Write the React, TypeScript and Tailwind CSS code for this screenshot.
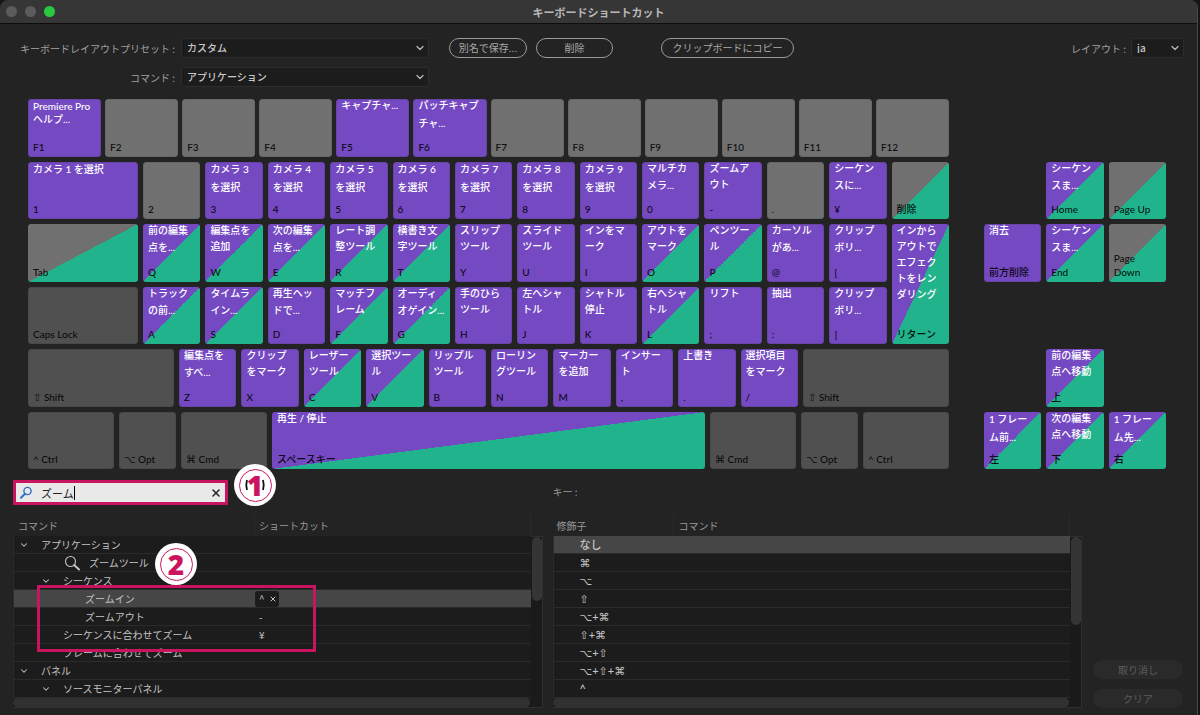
import { ChevronDown, X } from 'lucide-react'
import clsx from 'clsx'

type Tone = 'app' | 'empty' | 'both' | 'panel' | 'modifier'

type KeyDef = {
  cap: string
  label?: string
  tone: Tone
  leading?: string
  className?: string
}

const tones: Record<Tone, string> = {
  app: 'bg-[#7449c2] border-[#6844a9]',
  empty: 'bg-[#707070] border-[#676767]',
  both: 'bg-[linear-gradient(to_bottom_right,#7449c2_50%,#21b48c_50%)] border-transparent bg-origin-border',
  panel:
    'bg-[linear-gradient(to_bottom_right,#707070_50%,#21b48c_50%)] border-transparent bg-origin-border',
  modifier: 'bg-[#505050] border-[#494949]',
}

const app = (cap: string, label: string): KeyDef => ({ cap, label, tone: 'app' })
const both = (cap: string, label: string, className?: string): KeyDef => ({
  cap,
  label,
  tone: 'both',
  className,
})
const empty = (cap: string): KeyDef => ({ cap, tone: 'empty' })
const modifier = (cap: string): KeyDef => ({ cap, tone: 'modifier' })

const functionKeys: KeyDef[] = [
  {
    cap: 'F1',
    label: 'Premiere Pro\nヘルプ...',
    tone: 'app',
    leading: 'leading-[13px]',
  },
  empty('F2'),
  empty('F3'),
  empty('F4'),
  app('F5', 'キャプチャ...'),
  {
    cap: 'F6',
    label: 'パッチキャプ\nチャ...',
    tone: 'app',
    leading: 'leading-[18px] -mt-1',
  },
  empty('F7'),
  empty('F8'),
  empty('F9'),
  empty('F10'),
  empty('F11'),
  empty('F12'),
]

const letterKeys: KeyDef[] = [
  app('1', 'カメラ 1 を選択'),
  empty('2'),
  app('3', 'カメラ 3\nを選択'),
  app('4', 'カメラ 4\nを選択'),
  app('5', 'カメラ 5\nを選択'),
  app('6', 'カメラ 6\nを選択'),
  app('7', 'カメラ 7\nを選択'),
  app('8', 'カメラ 8\nを選択'),
  app('9', 'カメラ 9\nを選択'),
  app('0', 'マルチカ\nメラ...'),
  app('-', 'ズームア\nウト'),
  empty('.'),
  app('¥', 'シーケン\nスに...'),
  { cap: '削除', tone: 'panel' },

  { cap: 'Tab', tone: 'panel' },
  both('Q', '前の編集\n点を...'),
  both('W', '編集点を\n追加'),
  both('E', '次の編集\n点を...'),
  both('R', 'レート調\n整ツール'),
  both('T', '横書き文\n字ツール'),
  app('Y', 'スリップ\nツール'),
  app('U', 'スライド\nツール'),
  app('I', 'インをマ\nーク'),
  both('O', 'アウトを\nマーク'),
  both('P', 'ペンツー\nル'),
  app('@', 'カーソル\nがあ...'),
  app('[', 'クリップ\nボリ...'),
  both(
    'リターン',
    'インから\nアウトで\nエフェク\nトをレン\nダリング',
    'row-span-2',
  ),

  modifier('Caps Lock'),
  both('A', 'トラック\nの前...'),
  both('S', 'タイムラ\nイン...'),
  app('D', '再生ヘッ\nドで...'),
  both('F', 'マッチフ\nレーム'),
  both('G', 'オーディ\nオゲイン...'),
  app('H', '手のひら\nツール'),
  app('J', '左へシャ\nトル'),
  app('K', 'シャトル\n停止'),
  both('L', '右へシャ\nトル'),
  app(';', 'リフト'),
  app(':', '抽出'),
  app(']', 'クリップ\nボリ...'),
]

const shiftRow: KeyDef[] = [
  modifier('⇧ Shift'),
  app('Z', '編集点を\nすべ...'),
  app('X', 'クリップ\nをマーク'),
  both('C', 'レーザー\nツール'),
  both('V', '選択ツー\nル'),
  app('B', 'リップル\nツール'),
  app('N', 'ローリン\nグツール'),
  app('M', 'マーカー\nを追加'),
  app(',', 'インサー\nト'),
  app('.', '上書き'),
  app('/', '選択項目\nをマーク'),
  modifier('⇧ Shift'),
]

const spaceRow: KeyDef[] = [
  modifier('^ Ctrl'),
  modifier('⌥ Opt'),
  modifier('⌘ Cmd'),
  both('スペースキー', '再生 / 停止'),
  modifier('⌘ Cmd'),
  modifier('⌥ Opt'),
  modifier('^ Ctrl'),
]

const navKeys: KeyDef[] = [
  both('Home', 'シーケン\nスま...', 'col-start-2 row-start-2'),
  { cap: 'Page Up', tone: 'panel', className: 'col-start-3 row-start-2' },
  {
    cap: '前方削除',
    label: '消去',
    tone: 'app',
    className: 'col-start-1 row-start-3',
  },
  both('End', 'シーケン\nスま...', 'col-start-2 row-start-3'),
  { cap: 'Page\nDown', tone: 'panel', className: 'col-start-3 row-start-3' },
  both('上', '前の編集\n点へ移動', 'col-start-2 row-start-5'),
  both('左', '1 フレー\nム前...', 'col-start-1 row-start-6'),
  both('下', '次の編集\n点へ移動', 'col-start-2 row-start-6'),
  both('右', '1 フレー\nム先...', 'col-start-3 row-start-6'),
]

// Mixed-script labels get a taller line than pure kana / kanji ones
const labelLeading = (label: string) => {
  if (/\d/.test(label)) return 'leading-[18px] -mt-[3px]'
  if (label.includes('...')) return 'leading-[17px] -mt-[3px]'
  return 'leading-4 -mt-[3px]'
}

function Key({ cap, label = '', tone, leading, className }: KeyDef) {
  return (
    <button
      type="button"
      className={clsx(
        "flex min-w-0 flex-col justify-between rounded-[3px] border pb-0.5 pl-1 text-left font-['Lato','DejaVu_Sans','Noto_Sans_CJK_JP',sans-serif] whitespace-pre",
        tones[tone],
        className,
      )}
    >
      <span
        className={clsx(
          'text-[10px] font-medium text-white',
          leading ?? labelLeading(label),
        )}
      >
        {label}
      </span>
      <span className="text-[10px] font-medium leading-[14px] text-black/90">
        {cap}
      </span>
    </button>
  )
}

function Keyboard() {
  return (
    <div className="mt-3 flex h-[370px] gap-[35px] pl-7 pr-[31px]">
      <div className="grid min-w-0 flex-1 grid-rows-6 gap-[5px]">
        <div className="grid grid-cols-12 gap-1">
          {functionKeys.map((k) => (
            <Key key={k.cap} {...k} />
          ))}
        </div>
        <div className="row-span-3 grid grid-cols-[110px_repeat(13,minmax(0,1fr))] grid-rows-3 gap-[5px]">
          {letterKeys.map((k) => (
            <Key key={k.cap} {...k} />
          ))}
        </div>
        <div className="grid grid-cols-[146px_repeat(10,minmax(0,1fr))_146px] gap-[5px]">
          {shiftRow.map((k, i) => (
            <Key key={i} {...k} />
          ))}
        </div>
        <div className="grid grid-cols-[86px_57px_86px_minmax(0,1fr)_86px_57px_86px] gap-[5px]">
          {spaceRow.map((k, i) => (
            <Key key={i} {...k} />
          ))}
        </div>
      </div>
      <div className="grid w-[182px] grid-cols-3 grid-rows-6 gap-[5px]">
        {navKeys.map((k) => (
          <Key key={k.cap} {...k} />
        ))}
      </div>
    </div>
  )
}

function Select({
  id,
  value,
  className,
}: {
  id: string
  value: string
  className: string
}) {
  return (
    <div className={clsx('relative h-5', className)}>
      <select
        id={id}
        defaultValue={value}
        className="block h-5 w-full appearance-none rounded-[2px] border border-[#2c2c2c] bg-[#1c1c1c] pl-[5px] text-[10px] font-medium leading-none text-[#c8c8c8]"
      >
        <option>{value}</option>
      </select>
      <ChevronDown
        className="pointer-events-none absolute right-[3px] top-1 size-3 text-[#b8b8b8]"
        strokeWidth={2.5}
      />
    </div>
  )
}

function PillButton({
  children,
  className,
}: {
  children: string
  className: string
}) {
  return (
    <button
      type="button"
      className={clsx(
        'h-5 rounded-full border border-[#9a9a9a] text-[10px] leading-none text-[#a8a8a8]',
        className,
      )}
    >
      {children}
    </button>
  )
}

function Toolbar() {
  return (
    <div className="flex items-start pl-[13px] pr-[13px] pt-[14px] text-[10px] text-[#a0a0a0]">
      <div className="grid grid-cols-[162px_248px] items-center gap-x-[6px] gap-y-[9px]">
        <label htmlFor="preset" className="text-right">
          キーボードレイアウトプリセット :
        </label>
        <Select id="preset" value="カスタム" className="w-full" />
        <label htmlFor="command" className="text-right">
          コマンド :
        </label>
        <Select id="command" value="アプリケーション" className="w-full" />
      </div>
      <PillButton className="ml-5 w-[78px]">別名で保存...</PillButton>
      <PillButton className="ml-[9px] w-[77px]">削除</PillButton>
      <PillButton className="ml-12 w-[133px]">
        クリップボードにコピー
      </PillButton>
      <div className="ml-auto flex items-center gap-[5px]">
        <label htmlFor="layout">レイアウト :</label>
        <Select id="layout" value="ja" className="w-[53px]" />
      </div>
    </div>
  )
}

function SearchBox() {
  return (
    <div className="flex h-[25px] w-[215px] items-center border-[3px] border-[#c9155f] bg-[#e9e9e9] px-[3px]">
      <svg viewBox="0 0 14 14" className="size-[14px] text-[#2f6fc0]">
        <circle
          cx="8.5"
          cy="5"
          r="3.6"
          fill="none"
          stroke="currentColor"
          strokeWidth="1.4"
        />
        <path
          d="M6 7.8 L2 11.8"
          stroke="currentColor"
          strokeWidth="2"
          strokeLinecap="round"
        />
      </svg>
      <input
        type="text"
        aria-label="検索"
        defaultValue="ズーム"
        className="ml-2 field-sizing-content bg-transparent text-[11px] leading-4 text-[#222] outline-none"
      />
      <span className="h-[14px] w-px bg-black" />
      <button type="button" aria-label="クリア" className="ml-auto">
        <X className="size-3 text-[#222]" strokeWidth={3} />
      </button>
    </div>
  )
}

type Command = {
  name: string
  indent: string
  icon?: 'chevron' | 'zoom'
  shortcut?: string
  selected?: boolean
}

const commands: Command[] = [
  { name: 'アプリケーション', indent: 'pl-[5px] gap-3', icon: 'chevron' },
  { name: 'ズームツール', indent: 'pl-[50px] gap-2', icon: 'zoom' },
  { name: 'シーケンス', indent: 'pl-[27px] gap-3', icon: 'chevron' },
  { name: 'ズームイン', indent: 'pl-[71px]', shortcut: '^', selected: true },
  { name: 'ズームアウト', indent: 'pl-[71px]', shortcut: '-' },
  { name: 'シーケンスに合わせてズーム', indent: 'pl-[49px]', shortcut: '¥' },
  { name: 'フレームに合わせてズーム', indent: 'pl-[49px]' },
  { name: 'パネル', indent: 'pl-[5px] gap-3', icon: 'chevron' },
  { name: 'ソースモニターパネル', indent: 'pl-[27px] gap-3', icon: 'chevron' },
]

const modifiers = ['なし', '⌘', '⌥', '⇧', '⌥+⌘', '⇧+⌘', '⌥+⇧', '⌥+⇧+⌘', '^']

const headCell =
  'h-[21px] p-0 text-left font-normal leading-5 text-[#989898] border-r border-[#2a2a2a]'

function ListPanel({
  children,
  thumb,
}: {
  children: React.ReactNode
  thumb: string
}) {
  return (
    <div>
      <div className="flex">
        <div className="min-w-0 flex-1">{children}</div>
        <div className="mt-[21px] w-3 border-r border-t border-[#303030] bg-[#1a1a1a] pl-px">
          <div className={clsx('w-[10px] rounded-full bg-[#353535]', thumb)} />
        </div>
      </div>
      <div className="border-b border-r border-[#303030] bg-[#1a1a1a] pr-3">
        <div className="h-[9px] rounded-full bg-[#313131]" />
      </div>
    </div>
  )
}

function CommandList() {
  return (
    <ListPanel thumb="h-16">
      <table className="w-full table-fixed border-separate border-spacing-0 text-[10px] text-[#c4c4c4]">
        <thead>
          <tr>
            <th className={clsx(headCell, 'w-[242px] pl-[5px]')}>コマンド</th>
            <th className={clsx(headCell, 'pl-1')}>ショートカット</th>
          </tr>
        </thead>
        <tbody>
          {commands.map((c) => (
            <tr
              key={c.name}
              className={c.selected ? 'bg-[#464646]' : 'bg-[#1c1c1c]'}
            >
              <td className="h-[18px] border-b border-l border-[#2b2b2b] p-0">
                <div className={clsx('flex h-[17px] items-center', c.indent)}>
                  {c.icon === 'chevron' && (
                    <ChevronDown className="size-[10px]" strokeWidth={2.5} />
                  )}
                  {c.icon === 'zoom' && (
                    <svg viewBox="0 0 17 16" className="h-4 w-[17px]">
                      <circle
                        cx="6.5"
                        cy="6.5"
                        r="5"
                        fill="none"
                        stroke="currentColor"
                        strokeWidth="1.1"
                      />
                      <path
                        d="M10.2 10 L15 14.5"
                        stroke="currentColor"
                        strokeWidth="2"
                        strokeLinecap="round"
                      />
                    </svg>
                  )}
                  <span className="whitespace-nowrap">{c.name}</span>
                </div>
              </td>
              <td className="h-[18px] border-b border-[#2b2b2b] p-0">
                {c.selected ? (
                  <span className="flex h-4 w-6 items-center justify-between rounded-[3px] bg-[#1c1c1c] pl-1 pr-0.5">
                    <span className="leading-4">{c.shortcut}</span>
                    <button type="button" aria-label="ショートカットを削除">
                      <X className="size-2" strokeWidth={3} />
                    </button>
                  </span>
                ) : (
                  <span className="block pl-1 leading-[17px]">
                    {c.shortcut}
                  </span>
                )}
              </td>
            </tr>
          ))}
        </tbody>
      </table>
    </ListPanel>
  )
}

function ModifierList() {
  return (
    <ListPanel thumb="h-[88px]">
      <table className="w-full table-fixed border-separate border-spacing-0 text-[10px] text-[#c4c4c4]">
        <thead>
          <tr>
            <th className={clsx(headCell, 'w-[121px] pl-1')}>修飾子</th>
            <th className={clsx(headCell, 'pl-[5px]')}>コマンド</th>
          </tr>
        </thead>
        <tbody>
          {modifiers.map((m, i) => (
            <tr key={m} className={i === 0 ? 'bg-[#464646]' : 'bg-[#1c1c1c]'}>
              <td className="h-[18px] border-b border-l border-[#2b2b2b] p-0 pl-[26px] font-['Lato','DejaVu_Sans','Noto_Sans_CJK_JP',sans-serif] text-[11px] font-medium leading-[17px]">
                {m}
              </td>
              <td className="h-[18px] border-b border-[#2b2b2b] p-0" />
            </tr>
          ))}
        </tbody>
      </table>
    </ListPanel>
  )
}

function Badge({ n, className }: { n: number; className: string }) {
  return (
    <div
      className={clsx(
        'absolute flex size-[42px] items-center justify-center rounded-full bg-white',
        className,
      )}
    >
      <div className="flex size-[33px] items-center justify-center rounded-full border border-[#c9155f] text-[28px] font-extrabold leading-none text-[#c9155f]">
        {n === 1 && (
          <svg
            viewBox="0 0 22 12"
            className="absolute h-3 w-[22px]"
            fill="none"
            stroke="#111"
            strokeWidth="1.8"
          >
            <path d="M3 1 Q1.5 6 3 11" />
            <path d="M19 1 Q20.5 6 19 11" />
          </svg>
        )}
        <span className="relative font-['Open_Sans','Noto_Sans',sans-serif]">
          {n}
        </span>
      </div>
    </div>
  )
}

function DisabledButton({ children }: { children: string }) {
  return (
    <button
      type="button"
      disabled
      className="h-[19px] w-full rounded-full bg-[#2a2a2a] text-[10px] leading-none text-[#5c5c5c]"
    >
      {children}
    </button>
  )
}

function Bottom() {
  return (
    <div className="relative flex pb-[7px] pl-[13px] pr-[14px] pt-[11px]">
      <div className="flex min-w-0 flex-1 flex-col gap-[10px]">
        <SearchBox />
        <CommandList />
      </div>
      <div className="ml-[10px] flex min-w-0 flex-1 flex-col gap-[10px]">
        <p className="h-[25px] text-[10px] leading-6 text-[#989898]">キー :</p>
        <ModifierList />
      </div>
      <div className="ml-[11px] flex w-[90px] flex-col justify-end gap-[10px]">
        <DisabledButton>取り消し</DisabledButton>
        <DisabledButton>クリア</DisabledButton>
      </div>

      {/* Step annotations */}
      <div className="pointer-events-none absolute left-[37px] top-[116px] h-[67px] w-[279px] border-[3px] border-[#c9155f]" />
      <Badge n={1} className="left-[234px] top-[-5px]" />
      <Badge n={2} className="left-[155px] top-[74px]" />
    </div>
  )
}

export default function App() {
  return (
    <div className="min-h-screen bg-[#151515] pr-[2px] font-['Noto_Sans_CJK_JP','DejaVu_Sans',sans-serif]">
      <div className="min-h-screen overflow-hidden rounded-t-lg border-r border-[#4a4a4a] bg-[#232323]">
        <header className="flex h-6 items-center border-b border-[#0d0d0d] bg-[#363636]">
          <div className="flex w-24 gap-2 pl-[6px]">
            <span className="size-[11px] rounded-full bg-[#5b5b5b]" />
            <span className="size-[11px] rounded-full bg-[#5b5b5b]" />
            <span className="size-[11px] rounded-full bg-[#28c840]" />
          </div>
          <h1 className="flex-1 text-center text-[11px] font-bold leading-5 text-[#b8b8b8]">
            キーボードショートカット
          </h1>
          <div className="w-24" />
        </header>
        <Toolbar />
        <Keyboard />
        <Bottom />
      </div>
    </div>
  )
}
